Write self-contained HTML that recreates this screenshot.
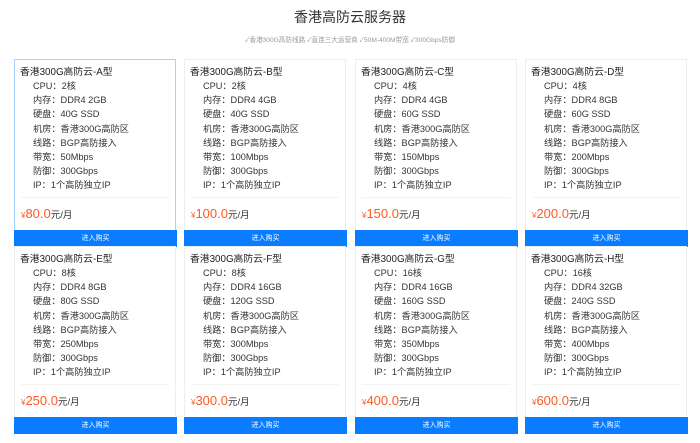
<!DOCTYPE html>
<html><head><meta charset="utf-8"><style>
*{margin:0;padding:0;box-sizing:border-box}
body{width:700px;height:443px;background:#fff;font-family:"Liberation Sans","Noto Sans CJK SC",sans-serif;color:#333;position:relative;overflow:hidden}
.t{position:absolute;top:7px;left:0;width:700px;text-align:center;font-size:14px;color:#333}
.s{position:absolute;top:34px;left:0;width:700px;text-align:center;font-size:6.6px;color:#999}
.c{position:absolute;width:162px;height:188px;border:1px solid #eee;border-bottom:none}
.c.a{border:1px solid #a8d0fa;border-bottom:none}
.n{position:absolute;left:5px;top:6px;font-size:9.8px;line-height:13px;color:#222;white-space:nowrap}
.l{position:absolute;left:18px;font-size:9.2px;line-height:12px;color:#333;white-space:nowrap}
.hr{position:absolute;left:6px;right:6px;top:137px;border-top:1px solid #f3f3f3}
.p{position:absolute;left:6px;top:146px;font-size:13px;color:#ff5a1f;white-space:nowrap}
.p small{font-size:8px}
.p i{font-style:normal;font-size:9.5px;color:#333}
.b{position:absolute;left:-1px;width:163px;top:170px;height:17px;background:#0a7cff;color:#fff;font-size:7px;text-align:center;line-height:17px}
</style></head><body>
<div class="t">香港高防云服务器</div>
<div class="s">✓香港300G高防线路 ✓直连三大运营商 ✓50M-400M带宽 ✓300Gbps防御</div>
<div id="w"></div>
<script>
var d=[["A",2,"2GB","40G",50,"80.0"],["B",2,"4GB","40G",100,"100.0"],["C",4,"4GB","60G",150,"150.0"],["D",4,"8GB","60G",200,"200.0"],["E",8,"8GB","80G",250,"250.0"],["F",8,"16GB","120G",300,"300.0"],["G",16,"16GB","160G",350,"400.0"],["H",16,"32GB","240G",400,"600.0"]];
var xs=[14,184,355,525],ys=[59,246],h="";
d.forEach(function(r,i){
var x=xs[i%4],y=ys[Math.floor(i/4)];
var L=["CPU："+r[1]+"核","内存：DDR4 "+r[2],"硬盘："+r[3]+" SSD","机房：香港300G高防区","线路：BGP高防接入","带宽："+r[4]+"Mbps","防御：300Gbps","IP：1个高防独立IP"];
h+='<div class="c'+(i==0?' a':'')+'" style="left:'+x+'px;top:'+y+'px"><div class="n">香港300G高防云-'+r[0]+'型</div>';
L.forEach(function(t,j){h+='<div class="l" style="top:'+(20+j*14.2)+'px">'+t+'</div>';});
h+='<div class="hr"></div><div class="p"><small>¥</small>'+r[5]+'<i>元/月</i></div><div class="b">进入购买</div></div>';
});
document.getElementById("w").innerHTML=h;
</script>
</body></html>
